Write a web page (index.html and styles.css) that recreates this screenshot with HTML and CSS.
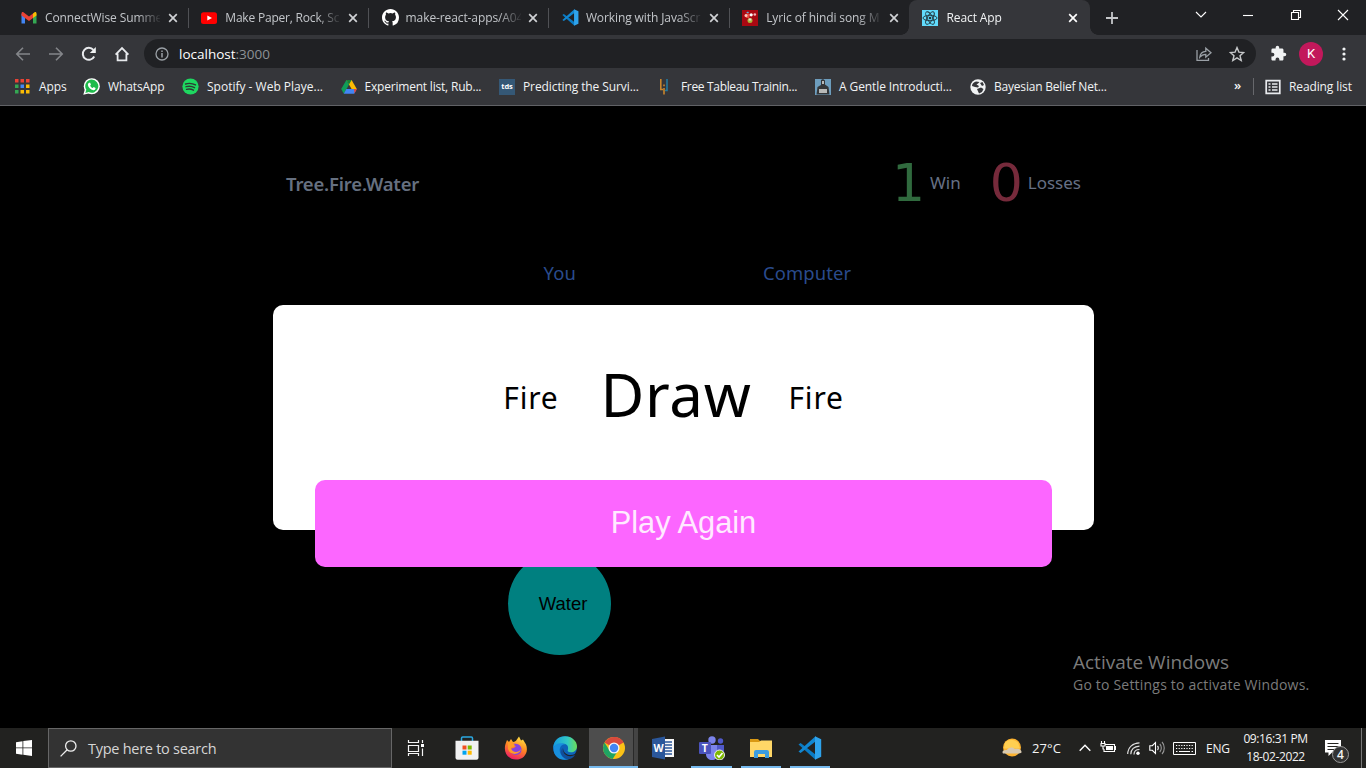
FILE: index.html
```html
<!DOCTYPE html>
<html lang="en">
<head>
<meta charset="utf-8">
<title>React App</title>
<link rel="stylesheet" href="styles.css">
</head>
<body>
<svg class="defs" width="0" height="0">
  <defs>
    <symbol id="x" viewBox="0 0 10 10"><path d="M1.2 1.2l7.6 7.6M8.8 1.2L1.2 8.8" fill="none" stroke="currentColor" stroke-width="1.7"/></symbol>
    <symbol id="vscode" viewBox="0 0 24 24"><path d="M.5 8.600L2.600 7l14.900 11.500v5.200z" fill="#0a7bc4"/><path d="M.5 15.400L2.600 17 17.500 5.500V.3z" fill="#1287d1"/><path d="M17 .3l6.200 2.900v17.600L17 23.700z" fill="#2ea3ec"/></symbol>
  </defs>
</svg>

<header class="browser">
  <div class="tabs">
    <div class="tab">
      <svg class="fav" viewBox="0 0 16 16"><path d="M0.5 13.5V3.8L4 6.5v7z" fill="#4285f4"/><path d="M12 6.5l3.5-2.7v9.7H12z" fill="#34a853"/><path d="M12 3.5l1.6-1.2c.9-.5 1.9 0 1.9 1.3v1.8L12 8z" fill="#fbbc04"/><path d="M.5 5.4V3.6c0-1.3 1-1.8 1.9-1.3L8 6.5l4-3V8l-4 3z" fill="#ea4335"/></svg>
      <span class="tab-title">ConnectWise Summe</span><svg class="close"><use href="#x"/></svg>
    </div>
    <div class="tab">
      <svg class="fav" viewBox="0 0 16 16"><rect x="0" y="2.2" width="16" height="11.8" rx="2.5" fill="#f00"/><path d="M6.3 5.4v5.2L11 8z" fill="#fff"/></svg>
      <span class="tab-title tight">Make Paper, Rock, Sc</span><svg class="close"><use href="#x"/></svg>
    </div>
    <div class="tab">
      <svg class="fav big" viewBox="0 0 16 16"><path fill="#fff" d="M8 0C3.58 0 0 3.58 0 8c0 3.54 2.29 6.53 5.47 7.59.4.07.55-.17.55-.38v-1.49c-2.01.37-2.53-.49-2.69-.94-.09-.23-.48-.94-.82-1.13-.28-.15-.68-.52-.01-.53.63-.01 1.08.58 1.23.82.72 1.21 1.87.87 2.33.66.07-.52.28-.87.51-1.07-1.78-.2-3.64-.89-3.64-3.95 0-.87.31-1.59.82-2.15-.08-.2-.36-1.02.08-2.12 0 0 .67-.21 2.2.82a7.4 7.4 0 014 0c1.53-1.04 2.2-.82 2.2-.82.44 1.1.16 1.92.08 2.12.51.56.82 1.27.82 2.15 0 3.07-1.87 3.75-3.65 3.95.29.25.54.73.54 1.48v2.2c0 .21.15.46.55.38A8 8 0 0016 8c0-4.42-3.58-8-8-8z"/></svg>
      <span class="tab-title">make-react-apps/A04</span><svg class="close"><use href="#x"/></svg>
    </div>
    <div class="tab">
      <svg class="fav big"><use href="#vscode"/></svg>
      <span class="tab-title">Working with JavaScr</span><svg class="close"><use href="#x"/></svg>
    </div>
    <div class="tab">
      <svg class="fav" viewBox="0 0 16 16"><path fill="#a80812" d="M0 0h16v16H0z"/><path d="M3 4.500l3-1.500 2 2-1 3-3 0z" fill="#e8473d"/><circle cx="4" cy="5.500" r="1.500" fill="#f6c6bd"/><circle cx="9.200" cy="4.800" r="1.600" fill="#fff"/><circle cx="12.800" cy="4.500" r="1.300" fill="#f0b5b8"/><circle cx="8" cy="10.500" r="2.500" fill="#a9b83a"/><path d="M6.700 8.500h2.600v2H6.700z" fill="#e9dcd6"/><path d="M4 3l2-1.500L7 3z" fill="#58b5e8"/></svg>
      <span class="tab-title">Lyric of hindi song M</span><svg class="close"><use href="#x"/></svg>
    </div>
    <div class="tab active">
      <svg class="fav" viewBox="0 0 16 16"><path fill="#61dafb" d="M0 0h16v16H0z"/><g fill="none" stroke="#20343c" stroke-width=".9"><ellipse cx="8" cy="8" rx="7" ry="2.7"/><ellipse cx="8" cy="8" rx="7" ry="2.7" transform="rotate(60 8 8)"/><ellipse cx="8" cy="8" rx="7" ry="2.7" transform="rotate(120 8 8)"/></g><circle cx="8" cy="8" r="1.3" fill="#20343c"/></svg>
      <span class="tab-title">React App</span><svg class="close"><use href="#x"/></svg>
    </div>
    <svg class="newtab" viewBox="0 0 12 12"><path d="M6 0v12M0 6h12" stroke="#c4c6c9" stroke-width="1.8"/></svg>
    <div class="window-buttons">
      <svg width="12" height="12" viewBox="0 0 12 12"><path d="M1 3l5 5 5-5" /></svg>
      <svg width="12" height="12" viewBox="0 0 12 12"><path d="M1 6.5h10"/></svg>
      <svg width="12" height="12" viewBox="0 0 12 12"><path d="M1.5 3.5h7v7h-7zM3.5 3.5v-2h7v7h-2"/></svg>
      <svg width="12" height="12" viewBox="0 0 12 12"><path d="M1 1l10 10M11 1L1 11"/></svg>
    </div>
  </div>

  <div class="toolbar">
    <svg class="dim" viewBox="0 0 16 16"><path d="M15 8H2M8 1.8L1.8 8 8 14.2"/></svg>
    <svg class="dim" viewBox="0 0 16 16"><path d="M1 8h13M8 1.8L14.2 8 8 14.2"/></svg>
    <svg viewBox="0 0 16 16"><path d="M13.2 10.5A6 6 0 1 1 12.4 3.9" stroke-width="2"/><path d="M14.8 1v6h-6z" fill="#f1f3f4" stroke="none"/></svg>
    <svg viewBox="0 0 16 16"><path d="M1.6 8.6L8 2l6.4 6.6M3.6 7.5v6.9h8.8V7.5" stroke-width="1.8"/></svg>
    <div class="omnibox">
      <svg class="info" viewBox="0 0 14 14"><circle cx="7" cy="7" r="6" fill="none" stroke="#9aa0a6" stroke-width="1.3"/><path d="M7 6v4.5M7 3.5v1.4" stroke="#9aa0a6" stroke-width="1.5"/></svg>
      <span class="url">localhost<i>:3000</i></span>
      <svg class="share" viewBox="0 0 16 16"><path d="M1 4v10.3h11.5V12M3.8 11.2c.4-3.7 2.5-5.7 6-5.9V2.2L15 6.8l-5.2 4.4V8.3c-2.8 0-4.4.9-6 2.9z" fill="none" stroke="#9aa0a6" stroke-width="1.3"/></svg>
      <svg class="star" viewBox="0 0 16 16"><path d="M8 1.6l1.9 4.5 4.8.4-3.7 3.2 1.2 4.8L8 11.9l-4.2 2.6L5 9.7 1.3 6.5l4.8-.4z" fill="none" stroke="#c6c8ca" stroke-width="1.4"/></svg>
    </div>
    <svg class="puzzle" viewBox="0 0 24 24"><path fill="#f1f3f4" stroke="none" d="M20.5 11H19V7c0-1.100-.9-2-2-2h-4V3.500a2.500 2.500 0 0 0-5 0V5H4a2 2 0 0 0-2 2v3.800h1.500a2.700 2.700 0 0 1 0 5.400H2V20c0 1.100.9 2 2 2h3.800v-1.500a2.700 2.700 0 0 1 5.400 0V22H17c1.100 0 2-.9 2-2v-4h1.500a2.500 2.500 0 0 0 0-5z"/></svg>
    <span class="avatar">K</span>
    <svg class="menu" viewBox="0 0 4 16"><g fill="#f1f3f4" stroke="none"><circle cx="2" cy="3" r="1.6"/><circle cx="2" cy="8" r="1.6"/><circle cx="2" cy="13" r="1.6"/></g></svg>
  </div>

  <nav class="bookmarks">
    <a class="apps"><svg viewBox="0 0 16 16"><path fill="#ea4335" d="M0 0h3.500v3.500H0zM5.500 0H9v3.500H5.500zM11 0h3.500v3.500H11z"/><path fill="#34a853" d="M0 5.500h3.500V9H0zM0 11h3.500v3.500H0z"/><path fill="#4285f4" d="M5.500 5.500H9V9H5.500z"/><path fill="#fbbc04" d="M11 5.500h3.500V9H11zM5.500 11H9v3.500H5.500zM11 11h3.500v3.500H11z"/></svg>Apps</a>
    <a class="whatsapp"><svg viewBox="0 0 18 18"><circle cx="9.300" cy="8.700" r="8.500" fill="#fff"/><path d="M.3 17.800l1.600-5.500 4 4z" fill="#fff"/><path d="M9.300 1.700a7 7 0 1 1-3.300 13.200l-3.500 1 1-3.400A7 7 0 0 1 9.300 1.700z" fill="#1fbb4c"/><path d="M6.400 4.900l1.200.1.800 2-.8 1.100c.6 1.300 1.500 2.100 2.700 2.600l1-1.100 2 1c.1 2-1.400 2.400-2.400 2.300C8 12.400 5.500 9.800 5.200 7.300c-.1-1 .4-2 1.200-2.400z" fill="#fff"/></svg>WhatsApp</a>
    <a class="spotify"><svg viewBox="0 0 18 18"><circle cx="9" cy="9" r="8.600" fill="#1ed760"/><path d="M3.800 6.300c3.400-1 7.300-.7 10.500 1.100M4.300 9.200c3-.9 6.300-.5 9 1M4.800 12c2.500-.7 5.100-.4 7.300.9" fill="none" stroke="#2c3b33" stroke-width="1.500" stroke-linecap="round"/></svg>Spotify - Web Playe...</a>
    <a class="drive"><svg viewBox="0 0 16 16"><path d="M5.400 1h5.200l5.200 9h-5.200z" fill="#fbbc04"/><path d="M5.400 1L8 5.500 2.800 14.800.2 10z" fill="#0f9d58"/><path d="M5.400 1h5.200L8 5.500z" fill="#188038"/><path d="M5.300 10h10.500l-2.600 4.800H2.800z" fill="#4285f4"/><path d="M13 10h2.800l-2.300 4.500z" fill="#ea4335"/></svg>Experiment list, Rub...</a>
    <a class="predict"><span class="tds-icon">tds</span>Predicting the Survi...</a>
    <a class="tableau"><svg viewBox="0 0 16 16"><path d="M3.800 0v10.500H6M7 5.500v1.800M7 9v6.500" fill="none" stroke="#c8862e" stroke-width="1.600"/><path d="M10 0v11.500H8" fill="none" stroke="#247aa0" stroke-width="1.600"/></svg>Free Tableau Trainin...</a>
    <a class="gentle"><svg viewBox="0 0 16 16"><path fill="#6d9dbd" d="M0 0h16v16H0z"/><path fill="#343638" d="M6 1l2-1 2 1.500v4l3.500 2.500 1 7.500h-13L2.500 8 6 6z"/><path fill="#b8b9b7" d="M4 10h8v4H4zM7 2h2v3H7z"/></svg>A Gentle Introducti...</a>
    <a class="globe"><svg viewBox="0 0 16 16"><circle cx="8" cy="8" r="7.700" fill="#f1f3f4"/><path d="M2 7c0-2 1.500-4 4-4.500L9.500 3 8 4.500l-1.500 1L9 7l-1 1.500L5 8zM10 4l2.500-1 1.500 3-2 1zM7 10l4-1.500L13.500 10 12 13l-3 1.500z" fill="#35363a"/></svg>Bayesian Belief Net...</a>
    <b>»</b>
    <a class="reading"><svg viewBox="0 0 16 16"><path d="M1.200 1.700h13.600v12.600H1.200z" fill="none" stroke="#e8eaed" stroke-width="1.700"/><path d="M3.500 5h2M7 5h5.500M3.500 8h2M7 8h5.500M3.500 11h2M7 11h5.500" stroke="#e8eaed" stroke-width="1.500"/></svg>Reading list</a>
  </nav>
</header>

<main class="page">
  <div class="game">
    <div class="scorebar">
      <h1>Tree.Fire.Water</h1>
      <div class="score win"><strong>1</strong><span>Win</span></div>
      <div class="score loss"><strong>0</strong><span>Losses</span></div>
    </div>
    <div class="players"><span class="you">You</span><span class="cpu">Computer</span></div>
    <button class="choice">Water</button>
  </div>
  <section class="modal">
    <div class="result"><span>Fire</span><strong>Draw</strong><span>Fire</span></div>
    <button class="again">Play Again</button>
  </section>
  <aside class="activate"><div>Activate Windows</div><p>Go to Settings to activate Windows.</p></aside>
</main>

<footer class="taskbar">
  <div class="start"><svg width="16" height="16" viewBox="0 0 16 16"><path fill="#fff" d="M0 2.200L6.500 1.200v6.300H0zM7.300 1.100L16 0v7.500H7.300zM0 8.300h6.500v6.400L0 13.800zM7.300 8.300H16V16l-8.700-1.200z"/></svg></div>
  <div class="search"><svg width="17" height="17" viewBox="0 0 17 17"><g fill="none" stroke="#eee" stroke-width="1.300"><circle cx="10.800" cy="6" r="5.200"/><path d="M7.200 9.800L.6 16.400"/></g></svg>Type here to search</div>
  <div class="task view"><svg width="17" height="16" viewBox="0 0 17 16"><path d="M1.500 0v2.500h10V0M1.500 5.500h10v6h-10zM1.500 16v-2.500h10V16M15.500 0v3M15.500 8.500V16" fill="none" stroke="#f4f4f4" stroke-width="1.200"/><path d="M14 4h3v3h-3z" fill="#fff"/></svg></div>
  <div class="task"><svg viewBox="0 0 24 24"><path d="M6.500 6V2.200c0-.7.500-1.200 1.200-1.200h8.600c.7 0 1.200.5 1.200 1.200V6" fill="none" stroke="#2ba8e0" stroke-width="1.500"/><path d="M.5 4.800h23v17a2 2 0 0 1-2 2h-19a2 2 0 0 1-2-2z" fill="#f1f1f1"/><path fill="#f25022" d="M7.500 9.500h4v4h-4z"/><path fill="#7fba00" d="M12.700 9.500h4v4h-4z"/><path fill="#00a4ef" d="M7.500 14.700h4v4h-4z"/><path fill="#ffb900" d="M12.700 14.700h4v4h-4z"/></svg></div>
  <div class="task"><svg viewBox="0 0 24 24"><defs><linearGradient id="ff" x1=".7" y1="0" x2=".3" y2="1"><stop offset="0" stop-color="#ffe146"/><stop offset=".45" stop-color="#ff8b20"/><stop offset="1" stop-color="#ed1769"/></linearGradient></defs><path d="M3 4l2 2 2-3 2 3c2-.3 3-.8 3.500-2L15 .5l2 4 2-1 3 5c3 8-2 15-10 15S-1 16 1.500 8z" fill="url(#ff)"/><path d="M7 9c3-2 8-2 10 2 2 5-2 8-5 8s-6-3-6-6l4-1 2-2z" fill="#8642df"/><path d="M4 6l4 1 3 2-2 2-2 1c1 5 8 5 10 1-1 6-11 7-13 0z" fill="#ff9b27"/></svg></div>
  <div class="task"><svg viewBox="0 0 24 24"><defs><linearGradient id="ed" x1="0" x2="1"><stop offset="0" stop-color="#159bde"/><stop offset=".6" stop-color="#32c9c4"/><stop offset="1" stop-color="#6bdc58"/></linearGradient></defs><circle cx="12" cy="12" r="11.800" fill="#0d62b9"/><path d="M.3 11C1 4 6 .2 12 .2c7 0 12 5 12 10 0 4-3 6-6 6-3 0-4-1-3-3 1-5-4-6-7-5-5 1-7.500 2-7.700 5z" fill="url(#ed)"/><path d="M8 10c-3 4-1 12 8 13-9 3-16-3-15.500-11C2 7 9 6 13 9c-2-1-4 0-5 1z" fill="#188fdd"/><path d="M11 12c-2 5 5 9 11 6l1-2 1 4-3 3c-7 1-13-5-10-11z" fill="#202326"/><path d="M10 12c-1 7 6 10 12 7-4 6-10 5-13 1-2-3-1-7 1-8z" fill="#104e9b"/></svg></div>
  <div class="task chrome"><svg viewBox="0 0 24 24"><circle cx="12" cy="12" r="11" fill="#fbc116"/><path d="M12 12L2.500 6.500A11 11 0 0 1 21.500 6.500z" fill="#d84a3d"/><path d="M12 1a11 11 0 0 1 9.500 5.500H12z" fill="#d84a3d"/><path d="M2.500 6.500a11 11 0 0 0 8.200 16.400L16 14.500 7.500 14.600z" fill="#1fa463"/><circle cx="12" cy="12" r="5.500" fill="#f5f5f5"/><circle cx="12" cy="12" r="4.200" fill="#4285f4"/></svg></div>
  <div class="task"><svg viewBox="0 0 24 24"><path d="M11 3h12v18H11z" fill="#f7f7f7"/><path d="M14 6h7M14 9h7M14 12h7M14 15h7M14 18h7" stroke="#2b579a" stroke-width="1.300"/><path d="M1 3l13-2.500v23L1 21z" fill="#2b579a"/><text x="2.500" y="16" font-size="10.500" class="glyph">W</text></svg></div>
  <div class="task open"><svg class="teams" viewBox="0 0 26 24"><circle cx="13" cy="4" r="3.700" fill="#7b83eb"/><circle cx="21.500" cy="5" r="2.700" fill="#5059c9"/><path d="M7 9h12v9c0 8-12 8-12 0z" fill="#7b83eb"/><path d="M18 9h7v7c0 3-3 5-7 3z" fill="#5059c9"/><rect x="0" y="6" width="12" height="12" rx="1" fill="#4b53bc"/><text x="2.800" y="16" font-size="10.500" class="glyph">T</text><circle cx="20.500" cy="19" r="5" fill="#7fba00" stroke="#eee"/><path d="M18 19l2 2 3.500-4" fill="none" stroke="#fff" stroke-width="1.600"/></svg></div>
  <div class="task open"><svg viewBox="0 0 24 24"><path d="M1 3h8l2 2h11v4H1z" fill="#d99914"/><path d="M1 6h9l2-1.500h11V21H1z" fill="#ffd767"/><path d="M5 21v-5a2 2 0 0 1 2-2h11a2 2 0 0 1 2 2v6h-4v-4H9v4H5z" fill="#3c9ddf"/></svg></div>
  <div class="task open"><svg viewBox="0 0 24 24"><use href="#vscode"/></svg></div>
  <div class="tray">
    <svg width="20" height="20" viewBox="0 0 20 20"><circle cx="10" cy="9.500" r="9" fill="#fcb22f"/><path d="M3 4.500a9 9 0 0 1 13 0l2 6H2z" fill="#ffcf51"/><path d="M1 15.500c-2-3 2-4 4-3.500 1-3 6-3.500 8-1 4-1 7 1 6.500 3.500-1 1-3 1.200-5 1z" fill="#d8c9b0"/></svg>
    <span class="temp">27°C</span>
    <svg width="12" height="12" viewBox="0 0 12 12"><path d="M.7 8.700L6 3.300l5.300 5.400" fill="none" stroke="#fff" stroke-width="1.400"/></svg>
    <svg width="16" height="14" viewBox="0 0 16 14"><path d="M5.500 3.500h9v7H4V8M.5 2.500h5M1.500 0v2.500M4.500 0v2.500M1 3v2h4V3M3 5v3h1" fill="none" stroke="#fff" stroke-width="1.100"/><path d="M6 5h7v4H6zM15 5h1v4h-1z" fill="#fff"/></svg>
    <svg width="13" height="13" viewBox="0 0 13 13"><g fill="none" stroke="#ddd" stroke-width="1.200"><path d="M.7 12C1 5 6 1 12.500.8M3.800 12.300C4 7.500 7 4.500 12.500 4.200M7 12.500c0-3 2-5 5.500-5"/></g><circle cx="11" cy="11.300" r="1.700" fill="#fff"/></svg>
    <svg width="16" height="14" viewBox="0 0 16 14"><g fill="none" stroke="#fff" stroke-width="1.100"><path d="M.8 4.700h2.500L6.500 1.500v11L3.300 9.300H.8z"/><path d="M8.500 5c1 1 1 3 0 4"/><path d="M10.800 3c2 2 2 6 0 8M13 1c3 3 3 9 0 12" stroke="#999"/></g></svg>
    <svg width="23" height="13" viewBox="0 0 23 13"><path d="M.5.500h22v12H.5z" fill="none" stroke="#fff"/><path d="M3 3.500h17M3 6.500h17" stroke="#fff" stroke-width="1.200" stroke-dasharray="1.200 1.400"/><path d="M3 9.500h1.500M6 9.500h11M18.500 9.500H20" stroke="#fff"/></svg>
    <span class="lang">ENG</span>
    <span class="clock"><span>09:16:31 PM</span><span>18-02-2022</span></span>
    <span class="notify"><svg width="17" height="16" viewBox="0 0 17 16"><path d="M0 0h16v12.500H7L3.500 16v-3.500H0z" fill="#fff"/><path d="M2.500 3.500h11M2.500 6.500h11M2.500 9.500h8" stroke="#262521" stroke-width="1.100"/></svg><b>4</b></span>
  </div>
</footer>
</body>
</html>
```

FILE: styles.css
```css
* { box-sizing: border-box; }
body { margin: 0; width: 1366px; height: 768px; overflow: hidden; background: #000; font-family: "Open Sans", "Noto Sans", sans-serif; display: flex; flex-direction: column; }
svg { display: block; flex: none; }
.defs { position: absolute; }
h1, p { margin: 0; }
button { border: 0; padding: 0; font-family: "Liberation Sans", Arial, sans-serif; }

/* Browser chrome */
.browser { height: 106px; background: #35363a; border-bottom: 1px solid #616266; flex: none; }
.tabs { height: 35px; background: #202124; display: flex; align-items: center; padding-left: 8px; }
.tab { width: 180.300px; height: 35px; display: flex; align-items: center; padding-left: 13px; position: relative; color: #c3c6ca; font-size: 12px; letter-spacing: -.1px; flex: none; }
.tab:not(.active):not(:nth-child(5))::after { content: ""; position: absolute; right: -.5px; top: 8px; width: 1px; height: 20px; background: #505155; }
.fav { width: 16px; height: 16px; }
.fav.big { width: 17px; height: 17px; margin-right: -1px; }
.tab-title { width: 115px; margin-left: 8px; white-space: nowrap; line-height: 18px; mask-image: linear-gradient(to right, #000 92px, transparent 117px); }
.tab-title.tight { letter-spacing: -.2px; }
.close { width: 10px; height: 10px; margin-left: 7.800px; color: #d0d2d5; }
.active { background: #35363a; color: #f1f3f4; border-radius: 8px 8px 0 0; }
.active::before, .active::after { content: ""; position: absolute; bottom: 0; width: 8px; height: 8px; }
.active::before { left: -8px; background: radial-gradient(circle at 0 0, #202124 7.500px, #35363a 8px); }
.active::after { right: -8px; background: radial-gradient(circle at 100% 0, #202124 7.500px, #35363a 8px); }
.active .close { color: #fff; margin-left: 7px; }
.newtab { width: 12px; height: 12px; margin-left: 16.500px; }
.window-buttons { display: flex; gap: 35.300px; margin: 0 17px 5px auto; fill: none; stroke: #fff; stroke-width: 1.100; }

.toolbar { height: 37px; display: flex; align-items: center; padding-left: 15px; fill: none; stroke: #e8eaed; stroke-width: 1.600; }
.toolbar > svg { width: 16px; height: 16px; margin-right: 17px; }
.toolbar > .dim { stroke: #84868a; }
.omnibox { width: 1112px; height: 29px; margin-left: -3px; border-radius: 15px; background: #202124; display: flex; align-items: center; padding: 0 11px; }
.info { width: 14px; height: 14px; }
.url { margin-left: 10px; color: #fff; font-size: 13.500px; letter-spacing: 0; flex: 1; }
.url i { font-style: normal; color: #8d9196; }
.share { width: 16px; height: 16px; margin-right: 17px; }
.star { width: 16px; height: 16px; }
.toolbar > .puzzle { width: 17px; height: 17px; margin: 0 12px 0 14px; }
.avatar { width: 24px; height: 24px; border-radius: 50%; background: #c2185b; color: #fff; font: 13px/24px Roboto, sans-serif; text-align: center; }
.toolbar > .menu { width: 4px; margin-left: 19px; margin-right: 0; }

.bookmarks { height: 29px; display: grid; grid-template-columns: 68px 99px 158.500px 158.500px 158px 158px 155px 268px 15px 1fr; align-items: center; padding-left: 15px; color: #f1f3f4; font-size: 12px; white-space: nowrap; letter-spacing: -.12px; }
.bookmarks a { display: flex; align-items: center; }
.bookmarks svg { width: 16px; height: 16px; margin-right: 8px; }
.bookmarks .whatsapp svg, .bookmarks .spotify svg { width: 17px; height: 17px; }
.bookmarks .spotify { letter-spacing: 0; }
.bookmarks .drive { letter-spacing: -.2px; }
.bookmarks .predict, .bookmarks .gentle { letter-spacing: -.1px; }
.bookmarks .tableau { letter-spacing: -.33px; }
.bookmarks .globe { letter-spacing: -.2px; }
.tds-icon { width: 16px; height: 16px; background: #355876; color: #fff; font-size: 7.500px; line-height: 15px; text-align: center; font-weight: 700; margin-right: 8px; }
.bookmarks > b { font-size: 13px; font-weight: 600; margin-left: -4px; margin-top: -3px; }
.reading { border-left: 1px solid #67686c; height: 17px; padding-left: 11px; }

/* Game page */
.page { height: 622px; position: relative; flex: none; font-family: "Noto Sans", sans-serif; }
.game { width: 821px; margin: 0 0 0 273px; padding: 41px 14px 0 13px; }
.scorebar { height: 72px; display: flex; align-items: center; color: #667085; }
.scorebar h1 { font-size: 18.500px; font-weight: 600; letter-spacing: -.2px; flex: 1; color: #667080; }
.score { display: flex; align-items: center; font-size: 17px; }
.score span { margin-top: -2px; }
.score strong { font: 52px/72px "DejaVu Sans", sans-serif; }
.win strong { color: #306a3e; margin: 0 5px 0 -4px; }
.loss { margin-left: 29px; margin-right: -1px; }
.loss strong { color: #762a3b; margin-right: 5px; }
.players { display: flex; height: 28px; margin-top: 40px; color: #2a4b8d; font-size: 18.400px; line-height: 28px; padding-left: 257.500px; letter-spacing: .15px; }
.cpu { margin-left: 187px; }
.choice { display: block; margin: 265px 0 0 222px; width: 103px; height: 103px; border-radius: 50%; background: #008080; color: #000; font-size: 18.500px; padding-left: 7px; }
.modal { position: absolute; left: 273px; top: 199px; width: 821px; height: 225px; border-radius: 10px; background: #fff; padding: 46px 42px 0; }
.result { height: 88px; display: flex; align-items: center; justify-content: center; color: #000; font-size: 30px; padding-right: 20px; }
.result span { letter-spacing: .8px; margin-top: 4px; }
.result strong { font-size: 60px; font-weight: 400; letter-spacing: .7px; margin: -3px 37px 0 42px; line-height: 88px; }
.again { display: block; width: 737px; height: 87px; margin-top: 41px; border-radius: 10px; background: #fc66ff; color: #ffeaff; font-size: 30.800px; padding-bottom: 2px; }
.activate { position: absolute; left: 1073px; top: 543px; color: #7b7b7b; font-family: "Open Sans", sans-serif; white-space: nowrap; }
.activate div { font-size: 19px; line-height: 26px; }
.activate p { font-size: 14px; line-height: 20px; letter-spacing: .2px; }

/* Desktop taskbar */
.taskbar { height: 40px; background: #222220; display: flex; color: #f4f4f4; flex: none; }
.start { width: 48px; display: flex; align-items: center; justify-content: center; }
.search { width: 344px; border: 1px solid #666; background: #333; display: flex; align-items: center; gap: 11px; padding-left: 11px; font-size: 14.500px; color: #d6d6d6; letter-spacing: -.27px; }
.task { width: 49.100px; display: flex; align-items: center; justify-content: center; position: relative; flex: none; }
.task svg { width: 24px; height: 24px; }
.task svg.teams { width: 26px; }
.view { width: 47px; margin-right: 3px; }
.task.view svg { width: 17px; height: 16px; }
.open::after { content: ""; position: absolute; left: 4px; right: 5px; bottom: 0; height: 2px; background: #76b9ed; }
.chrome { background: linear-gradient(to right, #4d4d4d 44px, #292929 44px, #292929 45px, #444 45px); border-bottom: 2px solid #76b9ed; }
.chrome svg { position: relative; top: 1px; }
.glyph { font-family: "Open Sans", sans-serif; font-weight: 700; fill: #fff; }
.tray { margin-left: auto; width: 366px; display: grid; grid-template-columns: 24px 50px 21px 26px 24px 23px 33px 36px 76px 1fr; align-items: center; }
.temp { font-size: 13px; padding-left: 8px; letter-spacing: .1px; }
.tray > svg { justify-self: center; }
.lang { font-size: 12px; letter-spacing: -.2px; padding-left: 5px; }
.clock { font-size: 12px; letter-spacing: -.4px; padding-left: 1px; display: flex; flex-direction: column; align-items: center; line-height: 18px; white-space: nowrap; }
.notify { height: 40px; padding: 12px 0 0 12px; border-right: 1px solid #777; margin-right: 4px; position: relative; }
.notify b { position: absolute; left: 19px; top: 18px; width: 17px; height: 17px; border-radius: 50%; border: 1px solid #999; background: #333; font-size: 12px; line-height: 15px; text-align: center; font-weight: 600; }
```
